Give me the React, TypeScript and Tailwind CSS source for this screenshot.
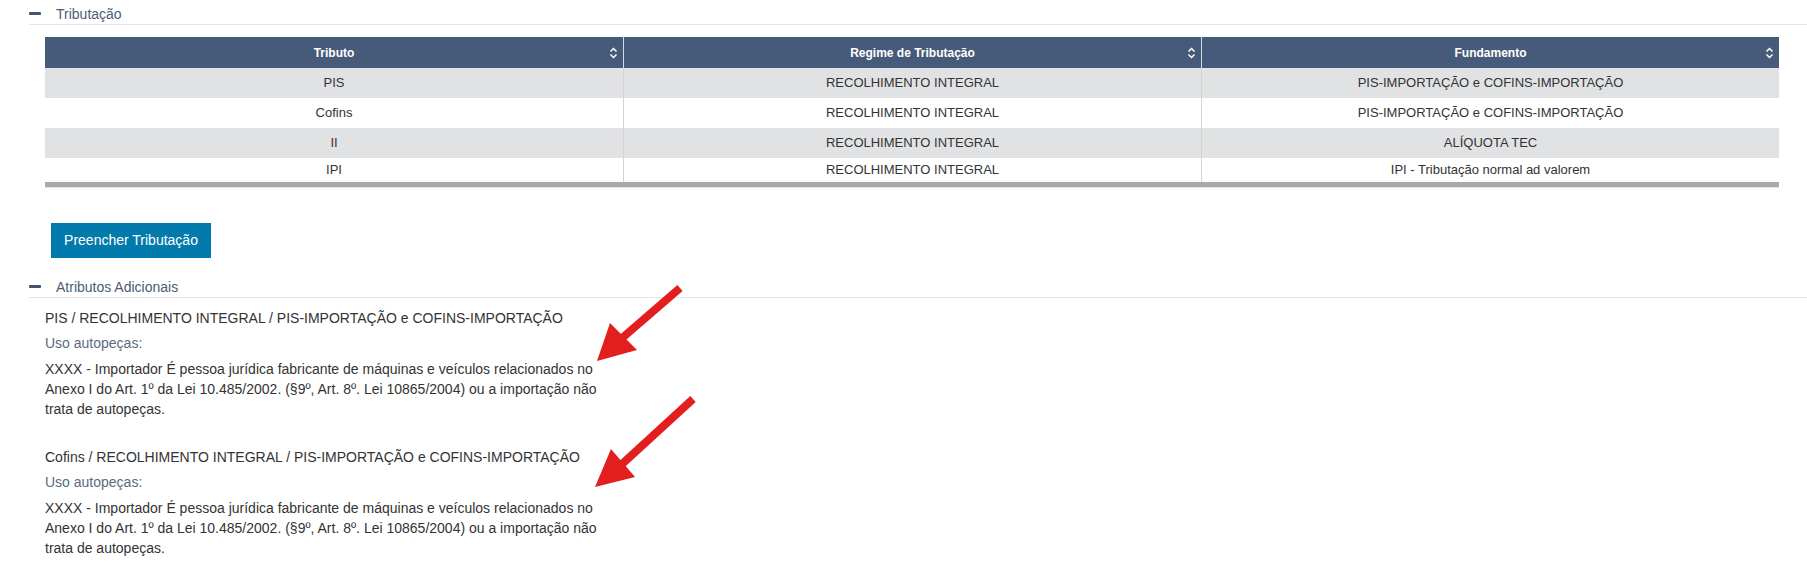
import React from "react";

type TaxRow = {
  tributo: string;
  regime: string;
  fundamento: string;
};

const rows: TaxRow[] = [
  { tributo: "PIS", regime: "RECOLHIMENTO INTEGRAL", fundamento: "PIS-IMPORTAÇÃO e COFINS-IMPORTAÇÃO" },
  { tributo: "Cofins", regime: "RECOLHIMENTO INTEGRAL", fundamento: "PIS-IMPORTAÇÃO e COFINS-IMPORTAÇÃO" },
  { tributo: "II", regime: "RECOLHIMENTO INTEGRAL", fundamento: "ALÍQUOTA TEC" },
  { tributo: "IPI", regime: "RECOLHIMENTO INTEGRAL", fundamento: "IPI - Tributação normal ad valorem" },
];

const atributos = [
  {
    titulo: "PIS / RECOLHIMENTO INTEGRAL / PIS-IMPORTAÇÃO e COFINS-IMPORTAÇÃO",
    label: "Uso autopeças:",
    valor:
      "XXXX - Importador É pessoa jurídica fabricante de máquinas e veículos relacionados no Anexo I do Art. 1º da Lei 10.485/2002. (§9º, Art. 8º. Lei 10865/2004) ou a importação não trata de autopeças.",
  },
  {
    titulo: "Cofins / RECOLHIMENTO INTEGRAL / PIS-IMPORTAÇÃO e COFINS-IMPORTAÇÃO",
    label: "Uso autopeças:",
    valor:
      "XXXX - Importador É pessoa jurídica fabricante de máquinas e veículos relacionados no Anexo I do Art. 1º da Lei 10.485/2002. (§9º, Art. 8º. Lei 10865/2004) ou a importação não trata de autopeças.",
  },
];

function SortIcon() {
  return (
    <svg width="9" height="12" viewBox="0 0 9 12" fill="none" className="shrink-0">
      <path d="M1.5 4.5 L4.5 1.5 L7.5 4.5" stroke="#ffffff" strokeWidth="1.5" />
      <path d="M1.5 7.5 L4.5 10.5 L7.5 7.5" stroke="#ffffff" strokeWidth="1.5" />
    </svg>
  );
}

function SectionHeader({ title }: { title: string }) {
  return (
    <div className="ml-[29px] flex h-[21px] items-center border-b border-[#e4e4e4] pb-px">
      <span className="h-[3px] w-[12px] rounded-[1px] bg-[#44546c]" />
      <span className="ml-[15px] text-[14px] leading-5 text-[#4d5d74]">{title}</span>
    </div>
  );
}

function HeaderCell({ label, first }: { label: string; first?: boolean }) {
  return (
    <div
      className={
        "flex h-[31px] items-center px-[5px] " + (first ? "" : "border-l border-[#d6dbe2]")
      }
    >
      <span className="w-[9px] shrink-0" />
      <span className="flex-1 text-center text-[12px] font-bold text-white">{label}</span>
      <SortIcon />
    </div>
  );
}

export default function App() {
  return (
    <div
      className="relative h-[582px] w-full overflow-hidden bg-white text-[#333333]"
      style={{ fontFamily: '"Liberation Sans", Arial, sans-serif' }}
    >
      {/* Tributação */}
      <div className="pt-[4px]">
        <SectionHeader title="Tributação" />

        <div className="mt-[12px] ml-[45px] mr-[28px]">
          <div className="grid grid-cols-3 bg-[#465b79]">
            <HeaderCell label="Tributo" first />
            <HeaderCell label="Regime de Tributação" />
            <HeaderCell label="Fundamento" />
          </div>
          <div className="border-b-[5px] border-[#a9a9a9]">
            {rows.map((row, i) => (
              <div
                key={row.tributo}
                className={
                  "grid grid-cols-3 text-[13px] " +
                  (i % 2 === 0 ? "bg-[#e1e2e4] " : "bg-white ") +
                  (i === rows.length - 1 ? "h-[24px]" : "h-[30px]")
                }
              >
                <div className="flex items-center justify-center">{row.tributo}</div>
                <div className="flex items-center justify-center border-l border-[#d4d4d4]">{row.regime}</div>
                <div className="flex items-center justify-center border-l border-[#d4d4d4]">{row.fundamento}</div>
              </div>
            ))}
          </div>
          <div className="h-px bg-[#e2e2e2]" />
        </div>

        <button className="mt-[35px] ml-[51px] h-[35px] w-[160px] bg-[#037aac] text-[14px] text-white">
          Preencher Tributação
        </button>
      </div>

      {/* Atributos Adicionais */}
      <div className="mt-[19px]">
        <SectionHeader title="Atributos Adicionais" />

        <div className="flex flex-col gap-[28px] pt-[10px] pl-[45px]">
          {atributos.map((a) => (
            <div key={a.titulo} className="w-[560px] text-[14px] leading-5">
              <div>{a.titulo}</div>
              <div className="mt-[5px] text-[#5b6a80]">{a.label}</div>
              <p className="mt-[6px]">{a.valor}</p>
            </div>
          ))}
        </div>
      </div>

      {/* callout arrows */}
      <svg
        className="pointer-events-none absolute inset-0"
        width="1807"
        height="582"
        viewBox="0 0 1807 582"
      >
        <line x1="680" y1="288" x2="621" y2="339" stroke="#e31e1e" strokeWidth="8" />
        <polygon points="597,361 610,323 637,350" fill="#e31e1e" />
        <line x1="693" y1="399" x2="621" y2="465" stroke="#e31e1e" strokeWidth="8" />
        <polygon points="595,487 611,449 635,477" fill="#e31e1e" />
      </svg>
    </div>
  );
}
